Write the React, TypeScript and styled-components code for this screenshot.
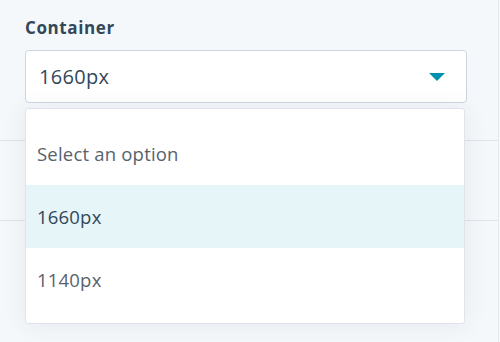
import React from 'react';
import styled, { createGlobalStyle } from 'styled-components';

const GlobalStyle = createGlobalStyle`
	html, body {
		margin: 0;
		padding: 0;
		background: #f5f8fa;
		font-family: 'Open Sans', 'Lato', sans-serif;
	}
`;

const Panel = styled.div`
	position: relative;
	width: 498px;
	height: 342px;
	border-right: 1px solid #e4e9ef;
	background: #f5f8fa;
	overflow: hidden;
`;

const Field = styled.div`
	display: flex;
	flex-direction: column;
	padding: 15px 31px 0 25px;
	height: 140px;
	box-sizing: border-box;
`;

const Label = styled.label`
	font-size: 17px;
	line-height: 25px;
	font-weight: 700;
	letter-spacing: 0.6px;
	color: #33475b;
	margin-bottom: 10px;
`;

const SelectBox = styled.div`
	display: flex;
	align-items: center;
	justify-content: space-between;
	height: 53px;
	box-sizing: border-box;
	padding: 0 21px 0 13px;
	background: #fff;
	border: 1px solid #cbd6e2;
	border-radius: 4px;
	font-size: 20px;
	letter-spacing: 0.3px;
	color: #33475b;
`;

const Caret = styled.span`
	width: 0;
	height: 0;
	border-left: 8px solid transparent;
	border-right: 8px solid transparent;
	border-top: 8px solid #0091ae;
`;

const Section = styled.div`
	height: 79px;
	border-top: 1px solid #dfe3eb;
	border-bottom: 1px solid #dfe3eb;
`;

const Menu = styled.ul`
	position: absolute;
	top: 108px;
	left: 25px;
	width: 440px;
	margin: 0;
	padding: 13px 0 12px;
	list-style: none;
	background: #fff;
	border: 1px solid #dfe3eb;
	border-radius: 3px;
	box-shadow: 0 1px 24px rgba(45, 62, 80, 0.08);
	box-sizing: border-box;
`;

const Option = styled.li<{ selected?: boolean }>`
	display: flex;
	align-items: center;
	height: 63px;
	padding: 0 11px;
	font-size: 18.5px;
	letter-spacing: 0.2px;
	color: ${(p) => (p.selected ? '#33475b' : '#58626d')};
	background: ${(p) => (p.selected ? '#e5f5f8' : 'transparent')};
`;

const options = [
	{ label: 'Select an option' },
	{ label: '1660px', selected: true },
	{ label: '1140px' },
];

export default function App() {
	return (
		<>
			<GlobalStyle />
			<Panel>
				<Field>
					<Label>Container</Label>
					<SelectBox>
						<span>1660px</span>
						<Caret />
					</SelectBox>
				</Field>
				<Section />
				<Menu>
					{options.map((o) => (
						<Option key={o.label} selected={o.selected}>
							{o.label}
						</Option>
					))}
				</Menu>
			</Panel>
		</>
	);
}
